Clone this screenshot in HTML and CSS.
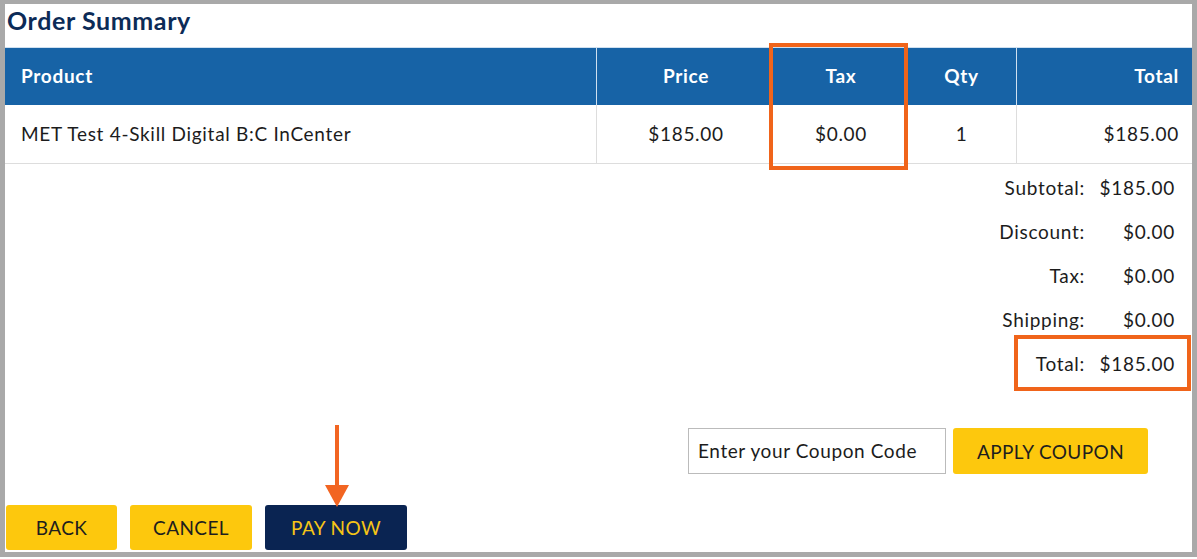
FILE: index.html
```html
<!DOCTYPE html>
<html lang="en">
  <head>
    <meta charset="UTF-8" />
    <meta name="viewport" content="width=device-width, initial-scale=1.0" />
    <title>Order Summary</title>
    <link rel="stylesheet" href="styles.css">
  </head>
  <body>
    <div class="panel">
      <h2 class="title">Order Summary</h2>
      <table class="order">
        <thead>
          <tr>
            <th class="col-product">Product</th>
            <th class="col-price">Price</th>
            <th class="col-tax">Tax</th>
            <th class="col-qty">Qty</th>
            <th class="col-total">Total</th>
          </tr>
        </thead>
        <tbody>
          <tr>
            <td class="col-product">MET Test 4-Skill Digital B:C InCenter</td>
            <td class="col-price">$185.00</td>
            <td class="col-tax">$0.00</td>
            <td class="col-qty">1</td>
            <td class="col-total">$185.00</td>
          </tr>
        </tbody>
      </table>

      <div class="summary">
        <div class="label">Subtotal:</div><div class="value">$185.00</div>
        <div class="label">Discount:</div><div class="value">$0.00</div>
        <div class="label">Tax:</div><div class="value">$0.00</div>
        <div class="label">Shipping:</div><div class="value">$0.00</div>
        <div class="label">Total:</div><div class="value">$185.00</div>
      </div>

      <div class="coupon">
        <input class="coupon-input" type="text" placeholder="Enter your Coupon Code">
        <button class="btn yellow apply">APPLY COUPON</button>
      </div>

      <div class="actions">
        <button class="btn yellow back">BACK</button>
        <button class="btn yellow cancel">CANCEL</button>
        <button class="btn navy pay">PAY NOW</button>
      </div>

      <!-- annotations -->
      <div class="mark mark-tax"></div>
      <div class="mark mark-total"></div>
      <svg class="arrow" width="30" height="84" viewBox="0 0 30 84">
        <line x1="15" y1="0" x2="15" y2="64" stroke="#f26522" stroke-width="4" />
        <polygon points="3,60 27,60 15,82" fill="#f26522" />
      </svg>
    </div>
  </body>
</html>
```

FILE: styles.css
```css
body {
  margin: 0;
  background: #fff;
  font-family: "Lato", "Noto Sans", sans-serif;
  color: #1c1c1c;
}
.panel {
  position: relative;
  width: 1197px;
  height: 557px;
  box-sizing: border-box;
  border: 5px solid #a9a9a9;
  border-top-width: 4px;
  background: #fff;
}
.title {
  margin: 0;
  height: 43px;
  padding-left: 2px;
  line-height: 33px;
  font-size: 25px;
  font-weight: 700;
  letter-spacing: 0.6px;
  color: #0c2b57;
}
.order {
  width: 100%;
  border-collapse: collapse;
  table-layout: fixed;
  font-size: 19px;
  letter-spacing: 0.7px;
}
.order th {
  background: #1763a6;
  color: #fff;
  font-weight: 700;
  height: 54px;
  padding: 0 0 3px;
  border-left: 1px solid #cfe0f0;
  border-top: 1px solid #cfe0f0;
}
.order td {
  height: 56px;
  padding: 0 0 2px;
  border-left: 1px solid #ddd;
  border-bottom: 1px solid #ddd;
}
.order th:first-child,
.order td:first-child {
  border-left: none;
}
.col-product {
  width: 575px;
  text-align: left;
  padding-left: 16px !important;
}
.col-price {
  width: 178px;
  text-align: center;
}
.col-tax {
  width: 132px;
  text-align: center;
}
.col-qty {
  width: 109px;
  text-align: center;
}
.col-total {
  text-align: right;
  padding-right: 13px !important;
}
.order th.col-tax,
.order td.col-tax,
.order th.col-qty,
.order td.col-qty {
  border-left: none;
}
.summary {
  display: grid;
  grid-template-columns: auto 78px;
  justify-content: end;
  column-gap: 12px;
  margin-top: 3px;
  padding-right: 17px;
  font-size: 19px;
  letter-spacing: 0.7px;
}
.summary .label,
.summary .value {
  height: 44px;
  line-height: 42px;
  text-align: right;
}
.coupon {
  display: flex;
  justify-content: flex-end;
  gap: 7px;
  margin-top: 41px;
  padding-right: 44px;
}
.coupon-input {
  width: 258px;
  height: 46px;
  box-sizing: border-box;
  border: 1px solid #bbb;
  padding: 0 9px 2px;
  font-family: inherit;
  font-size: 19px;
  letter-spacing: 0.6px;
  color: #1c1c1c;
}
.coupon-input::placeholder {
  color: #1c1c1c;
}
.btn {
  height: 45px;
  border: none;
  border-radius: 3px;
  font-family: inherit;
  font-size: 19px;
  letter-spacing: 0.4px;
  cursor: pointer;
}
.btn.yellow {
  background: #fdc80d;
  color: #1e1e1e;
}
.btn.navy {
  background: #0a2452;
  color: #f6c516;
}
.apply {
  width: 195px;
  height: 46px;
}
.actions {
  display: flex;
  gap: 13px;
  margin-top: 31px;
  padding-left: 1px;
}
.back {
  width: 111px;
}
.cancel {
  width: 122px;
}
.pay {
  width: 142px;
}
.mark {
  position: absolute;
  border: 4px solid #f0641a;
  box-sizing: border-box;
}
.mark-tax {
  left: 764px;
  top: 39px;
  width: 139px;
  height: 127px;
}
.mark-total {
  left: 1009px;
  top: 331px;
  width: 177px;
  height: 56px;
}
.arrow {
  position: absolute;
  left: 317px;
  top: 421px;
}
```
